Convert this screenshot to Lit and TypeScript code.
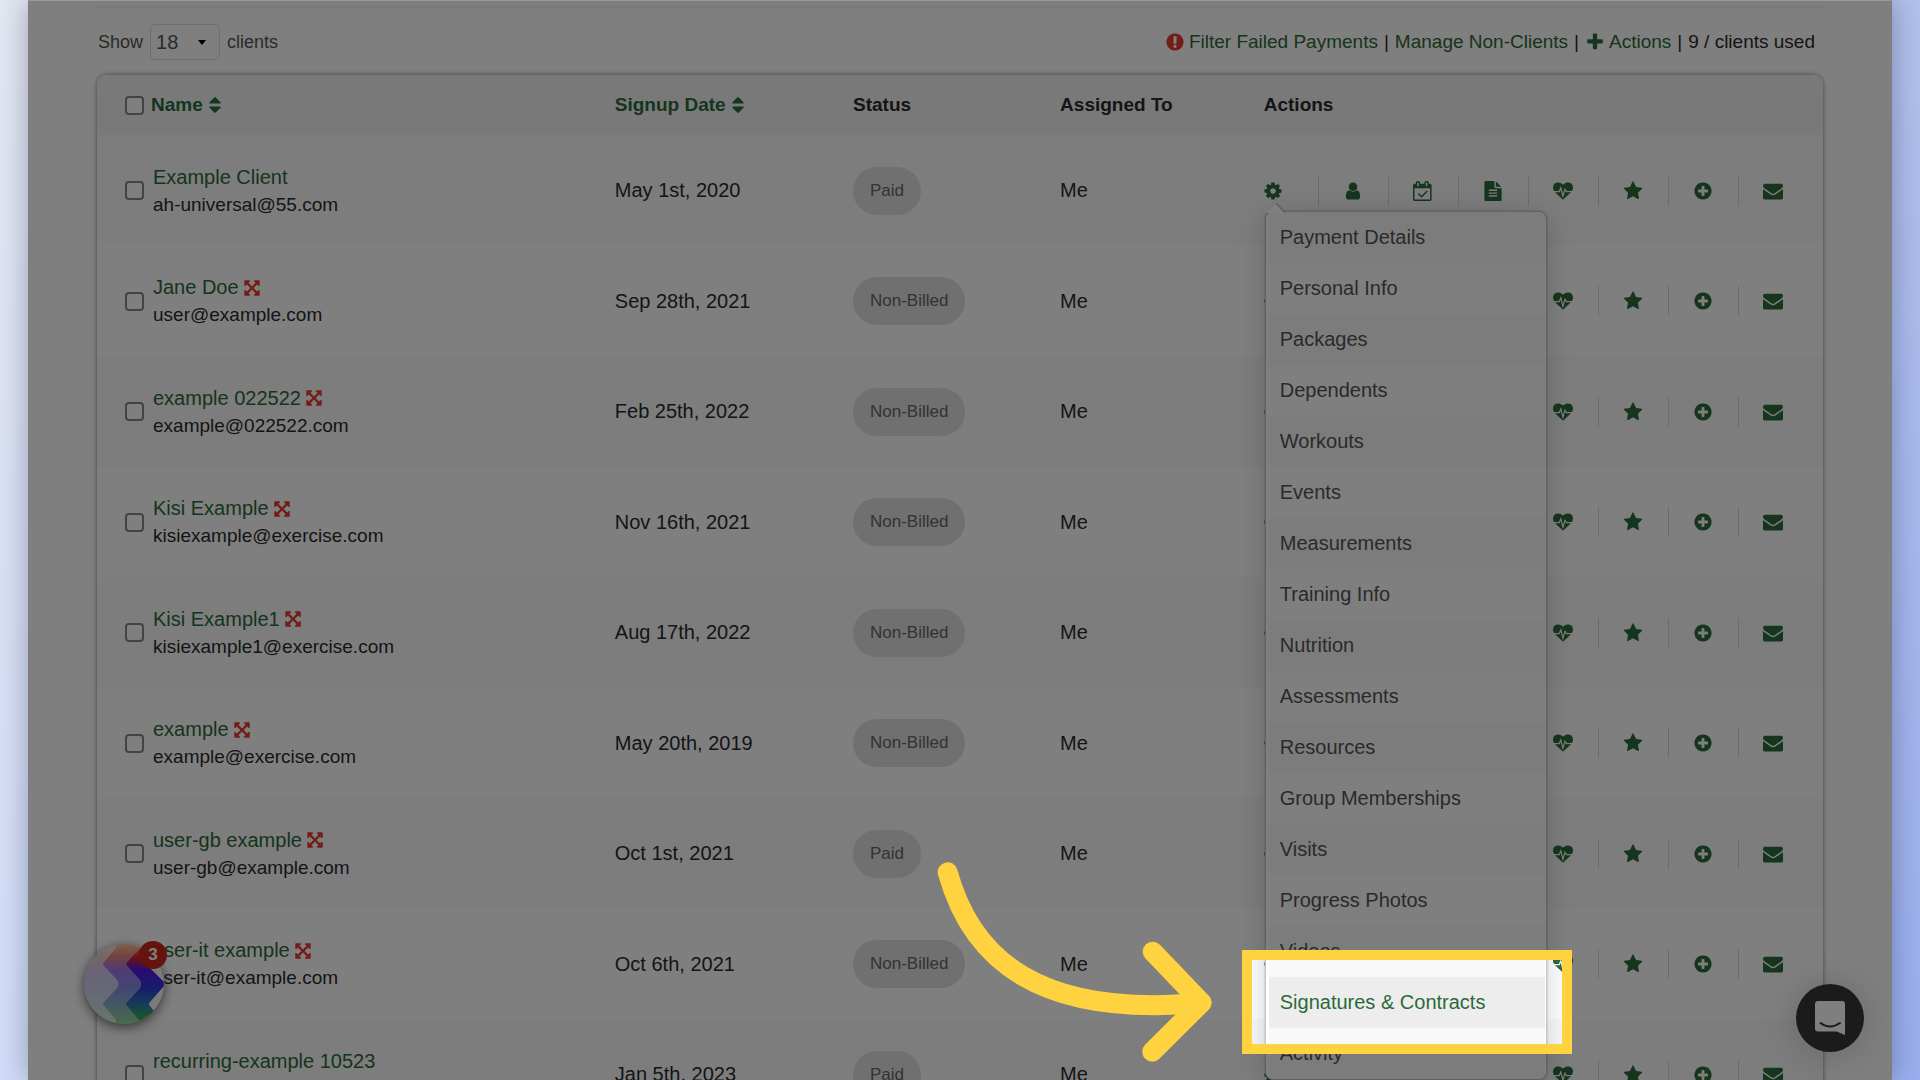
import { LitElement, html, css, svg, nothing } from "lit";
import { customElement, property } from "lit/decorators.js";

const ICONS: Record<string, string> = {
  cog: "M1152 896q0-106-75-181t-181-75-181 75-75 181 75 181 181 75 181-75 75-181zm512-109v222q0 12-8 23t-20 13l-185 28q-19 54-39 91 35 50 107 138 10 12 10 25t-9 23q-27 37-99 108t-94 71q-12 0-26-9l-138-108q-44 23-91 38-16 136-29 186-7 28-36 28h-222q-14 0-24.5-8.5t-11.5-21.5l-28-184q-49-16-90-37l-141 107q-10 9-25 9-14 0-25-11-126-114-165-168-7-10-7-23 0-12 8-23 15-21 51-66.5t54-70.5q-27-50-41-99l-183-27q-13-2-21-12.5t-8-23.5v-222q0-12 8-23t19-13l186-28q14-46 39-92-40-57-107-138-10-12-10-24 0-10 9-23 26-36 98.5-107.5t94.5-71.5q13 0 26 10l138 107q44-23 91-38 16-136 29-186 7-28 36-28h222q14 0 24.5 8.5t11.5 21.5l28 184q49 16 90 37l142-107q9-9 24-9 13 0 25 10 129 119 165 170 7 8 7 22 0 12-8 23-15 21-51 66.5t-54 70.5q26 50 41 98l183 28q13 2 21 12.5t8 23.5z",
  user: "M1536 1399q0 109-62.5 187t-150.5 78h-854q-88 0-150.5-78t-62.5-187q0-85 8.5-160.5t31.5-152 58.5-131 94-89 134.5-34.5q131 128 313 128t313-128q76 0 134.5 34.5t94 89 58.5 131 31.5 152 8.5 160.5zm-256-887q0 159-112.5 271.5t-271.5 112.5-271.5-112.5-112.5-271.5 112.5-271.5 271.5-112.5 271.5 112.5 112.5 271.5z",
  calendar: "M1303 964l-512 512q-10 9-23 9t-23-9l-288-288q-9-10-9-23t9-22l46-46q9-9 22-9t23 9l220 220 444-444q10-9 23-9t22 9l46 46q9 9 9 22t-9 23zm-1175 700h1408v-1024h-1408v1024zm384-1216v-288q0-14-9-23t-23-9h-64q-14 0-23 9t-9 23v288q0 14 9 23t23 9h64q14 0 23-9t9-23zm768 0v-288q0-14-9-23t-23-9h-64q-14 0-23 9t-9 23v288q0 14 9 23t23 9h64q14 0 23-9t9-23zm384-64v1280q0 52-38 90t-90 38h-1408q-52 0-90-38t-38-90v-1280q0-52 38-90t90-38h128v-96q0-66 47-113t113-47h64q66 0 113 47t47 113v96h384v-96q0-66 47-113t113-47h64q66 0 113 47t47 113v96h128q52 0 90 38t38 90z",
  file: "M1596 476q14 14 28 36h-472v-472q22 14 36 28zm-476 164h544v1056q0 40-28 68t-68 28h-1344q-40 0-68-28t-28-68v-1600q0-40 28-68t68-28h800v544q0 40 28 68t68 28zm160 736v-64q0-14-9-23t-23-9h-704q-14 0-23 9t-9 23v64q0 14 9 23t23 9h704q14 0 23-9t9-23zm0-256v-64q0-14-9-23t-23-9h-704q-14 0-23 9t-9 23v64q0 14 9 23t23 9h704q14 0 23-9t9-23zm0-256v-64q0-14-9-23t-23-9h-704q-14 0-23 9t-9 23v64q0 14 9 23t23 9h704q14 0 23-9t9-23z",
  heartbeat: "M896 1664q-26 0-44-18l-624-602q-10-8-27.5-26t-55.5-65.5-68-97.500-53.500-121-23.500-138q0-220 127-344t351-124q62 0 126.500 21.500t120 58 95.500 68.500 76 68q36-36 76-68t95.500-68.500 120-58 126.500-21.500q224 0 351 124t127 344q0 221-229 450l-623 600q-18 18-44 18z",
  star: "M1728 647q0 22-26 48l-363 354 86 500q1 7 1 20 0 21-10.5 35.5t-30.5 14.5q-19 0-40-12l-449-236-449 236q-22 12-40 12-21 0-31.5-14.5t-10.5-35.5q0-6 2-20l86-500-364-354q-25-27-25-48 0-37 56-46l502-73 225-455q19-41 49-41t49 41l225 455 502 73q56 9 56 46z",
  plusCircle: "M1344 960v-128q0-26-19-45t-45-19h-256v-256q0-26-19-45t-45-19h-128q-26 0-45 19t-19 45v256h-256q-26 0-45 19t-19 45v128q0 26 19 45t45 19h256v256q0 26 19 45t45 19h128q26 0 45-19t19-45v-256h256q26 0 45-19t19-45zm320-64q0 209-103 385.5t-279.5 279.5-385.5 103-385.5-103-279.5-279.5-103-385.5 103-385.5 279.5-279.5 385.5-103 385.5 103 279.5 279.5 103 385.5z",
  envelope: "M1792 710v794q0 66-47 113t-113 47h-1472q-66 0-113-47t-47-113v-794q44 49 101 87 362 246 497 345 57 42 92.5 65.5t94.5 48 110 24.5h2q51 0 110-24.5t94.5-48 92.5-65.5q170-123 498-345 57-39 100-87zm0-294q0 79-49 151t-122 123q-376 261-468 325-10 7-42.5 31t-54 38.5-52 32.5-57.5 27-50 9h-2q-23 0-50-9t-57.5-27-52-32.5-54-38.5-42.5-31q-91-64-262-182.5t-205-142.5q-62-42-117-115.5t-55-136.5q0-78 41.5-130t118.5-52h1472q65 0 112.5 47t47.5 113z",
  alert: "M896 128q209 0 385.5 103t279.5 279.5 103 385.5-103 385.5-279.5 279.5-385.5 103-385.5-103-279.5-279.5-103-385.5 103-385.5 279.5-279.5 385.5-103zm128 1247v-190q0-14-9-23.5t-22-9.5h-192q-13 0-23 10t-10 23v190q0 13 10 23t23 10h192q13 0 22-9.5t9-23.5zm-2-344l18-621q0-12-10-18-10-8-24-8h-220q-14 0-24 8-10 6-10 18l17 621q0 10 10 17.5t24 7.5h185q14 0 23.5-7.5t10.5-17.5z",
  plus: "M1600 736v192q0 40-28 68t-68 28h-416v416q0 40-28 68t-68 28h-192q-40 0-68-28t-28-68v-416h-416q-40 0-68-28t-28-68v-192q0-40 28-68t68-28h416v-416q0-40 28-68t68-28h192q40 0 68 28t28 68v416h416q40 0 68 28t28 68z",
  sort: "M1408 1088q0 26-19 45l-448 448q-19 19-45 19t-45-19l-448-448q-19-19-19-45t19-45 45-19h896q26 0 45 19t19 45zm0-384q0 26-19 45t-45 19h-896q-26 0-45-19t-19-45 19-45l448-448q19-19 45-19t45 19l448 448q19 19 19 45z",
  expand: "M1411 541l-355 355 355 355 144-144q29-31 70-14 39 17 39 59v448q0 26-19 45t-45 19h-448q-42 0-59-40-17-39 14-69l144-144-355-355-355 355 144 144q31 30 14 69-17 40-59 40h-448q-26 0-45-19t-19-45v-448q0-42 40-59 39-17 69 14l144 144 355-355-355-355-144 144q-19 19-45 19-12 0-24-5-40-17-40-59v-448q0-26 19-45t45-19h448q42 0 59 40 17 39-14 69l-144 144 355 355 355-355-144-144q-31-30-14-69 17-40 59-40h448q26 0 45 19t19 45v448q0 42-39 59-13 5-25 5-26 0-45-19z",
};

const icon = (name: string, cls = "") => html`<svg class="icon ${cls}" viewBox="0 0 1792 1792" aria-hidden="true">
  ${svg`<path d=${ICONS[name]} />`}
  ${name === "heartbeat" ? svg`<path class="pulse" d="M0 960H560L700 620 890 1360 1080 740 1210 960H1792" />` : nothing}
</svg>`;

interface Client {
  name: string;
  email: string;
  date: string;
  status: string;
  nonBilled: boolean;
}

const client = (name: string, email: string, date: string, status = "Non-Billed", flagged = true): Client => ({
  name,
  email,
  date,
  status,
  nonBilled: flagged,
});

const CLIENTS: Client[] = [
  client("Example Client", "ah-universal@55.com", "May 1st, 2020", "Paid", false),
  client("Jane Doe", "user@example.com", "Sep 28th, 2021"),
  client("example 022522", "example@022522.com", "Feb 25th, 2022"),
  client("Kisi Example", "kisiexample@exercise.com", "Nov 16th, 2021"),
  client("Kisi Example1", "kisiexample1@exercise.com", "Aug 17th, 2022"),
  client("example", "example@exercise.com", "May 20th, 2019"),
  client("user-gb example", "user-gb@example.com", "Oct 1st, 2021", "Paid"),
  client("user-it example", "user-it@example.com", "Oct 6th, 2021"),
  client("recurring-example 10523", "", "Jan 5th, 2023", "Paid", false),
];

const ACTIONS: [string, string][] = [
  ["cog", "Settings"],
  ["user", "Profile"],
  ["calendar", "Calendar"],
  ["file", "Notes"],
  ["heartbeat", "Health"],
  ["star", "Favorite"],
  ["plusCircle", "Add"],
  ["envelope", "Message"],
];

const MENU = [
  "Payment Details",
  "Personal Info",
  "Packages",
  "Dependents",
  "Workouts",
  "Events",
  "Measurements",
  "Training Info",
  "Nutrition",
  "Assessments",
  "Resources",
  "Group Memberships",
  "Visits",
  "Progress Photos",
  "Videos",
  "Signatures & Contracts",
  "Activity",
];

@customElement("client-menu")
export class ClientMenu extends LitElement {
  @property() active = "Signatures & Contracts";

  static styles = css`
    :host {
      display: block;
      box-sizing: border-box;
      width: 282px;
      padding: 0 1px 0 3px;
      border: 1px solid #c4c4c8;
      border-radius: 8px;
      background: #fff;
      box-shadow: 0 4px 28px rgba(40, 50, 90, 0.22), 0 0 2px rgba(0, 0, 0, 0.3);
    }
    .pointer {
      position: absolute;
      top: -10px;
      left: 1px;
      display: block;
      width: 18px;
      height: 11px;
    }
    .list {
      margin: 0;
      padding: 0;
      list-style: none;
      overflow: hidden;
      border-radius: 6px;
    }
    .item:nth-child(odd) {
      background: #f9f9f9;
    }
    .item.active {
      background: #ededed;
    }
    .link {
      display: block;
      padding: 0 11px;
      font-size: 20px;
      line-height: 51px;
      color: #555;
      text-decoration: none;
    }
    .active .link {
      color: #2b6a38;
    }
  `;

  render() {
    return html`
      <svg class="pointer" viewBox="0 0 18 11" aria-hidden="true">
        <path d="M0 11 9 1 18 11z" fill="#fff" />
        <path d="M9 1 18 10.5" stroke="#bbb" stroke-width="1.5" fill="none" />
      </svg>
      <ul class="list">
        ${MENU.map((m) => html`<li class="item ${m === this.active ? "active" : ""}"><a class="link" href="#">${m}</a></li>`)}
      </ul>
    `;
  }
}

@customElement("app-root")
export class AppRoot extends LitElement {
  static styles = css`
    :host {
      display: block;
      box-sizing: border-box;
      height: 100vh;
      overflow: hidden;
      padding: 0 28px;
      background: linear-gradient(135deg, #e4e8f2 0%, #d2dcf8 36%, #b2c1ec 64%, #9aafee 100%);
      font-family: "Liberation Sans", Arial, Helvetica, sans-serif;
      font-size: 20px;
      color: #2b2b2b;
    }
    .frame {
      height: 100%;
      box-shadow: 0 0 28px rgba(20, 25, 60, 0.35);
    }
    .window {
      position: relative;
      box-sizing: border-box;
      height: 100%;
      overflow: hidden;
      padding: 5px 69px 0;
      border-top: 1px solid #999;
      background: #fff;
    }
    .rule {
      height: 2px;
      margin: 0;
      border: 0;
      background: #f0f0f0;
    }
    .toolbar {
      display: flex;
      justify-content: space-between;
      align-items: center;
      height: 66px;
      padding: 1px 8px 0 1px;
      font-size: 19px;
    }
    .length {
      display: flex;
      align-items: center;
      gap: 7px;
      font-size: 18px;
      color: #555;
    }
    .select-wrap {
      display: grid;
      align-items: center;
    }
    .select-wrap > * {
      grid-area: 1 / 1;
    }
    .select {
      appearance: none;
      box-sizing: border-box;
      width: 70px;
      height: 36px;
      padding: 0 5px;
      border: 1px solid #dcdcdc;
      border-radius: 5px;
      background: #fff;
      font: inherit;
      font-size: 20px;
      color: #555;
    }
    .caret {
      justify-self: end;
      width: 8px;
      height: 5px;
      margin-right: 14px;
      fill: #000;
      pointer-events: none;
    }
    .links {
      display: flex;
      align-items: center;
      gap: 6px;
    }
    .link {
      color: #2b6a38;
      text-decoration: none;
    }
    .plain {
      display: inline-flex;
      align-items: center;
      gap: 4px;
    }
    .icon {
      display: block;
      flex: none;
      width: 20px;
      height: 20px;
      fill: #2b6a38;
    }
    .pulse {
      fill: none;
      stroke: #fcfcfc;
      stroke-width: 110;
    }
    .red {
      fill: #e8382c;
    }
    .small {
      width: 18px;
      height: 18px;
    }
    .card {
      border-radius: 10px;
      box-shadow: 0 0 5px rgba(30, 50, 60, 0.6);
    }
    .table {
      width: 100%;
      table-layout: fixed;
      border-collapse: separate;
      border-spacing: 0;
      overflow: hidden;
      border-radius: 10px;
      background: #fff;
    }
    .c-name {
      width: 30%;
    }
    .c-date {
      width: 13.8%;
    }
    .c-status {
      width: 12%;
    }
    .c-owner {
      width: 11.8%;
    }
    .th {
      height: 60px;
      padding: 0;
      background: #f2f2f2;
      text-align: left;
      font-size: 19px;
      font-weight: 700;
      color: #2b2b2b;
    }
    .td {
      height: 110px;
      padding: 0;
      vertical-align: middle;
    }
    .row:nth-child(odd) .td {
      height: 111px;
      background: #fafafa;
    }
    .who {
      display: flex;
      align-items: center;
      gap: 9px;
      padding-left: 28px;
    }
    .head {
      gap: 7px;
    }
    .sort {
      display: inline-flex;
      align-items: center;
      gap: 2px;
      padding: 0;
      border: 0;
      background: none;
      font: inherit;
      color: #2b6a38;
    }
    .check {
      appearance: none;
      box-sizing: border-box;
      flex: none;
      width: 19px;
      height: 19px;
      margin: 0;
      border: 2px solid #868686;
      border-radius: 4px;
      background: #fff;
    }
    .ident {
      display: flex;
      flex-direction: column;
    }
    .line {
      display: flex;
      align-items: center;
      gap: 4px;
      min-height: 27px;
      line-height: 27px;
    }
    .email {
      font-size: 19px;
    }
    .pill {
      display: inline-block;
      padding: 0 17px;
      border-radius: 24px;
      background: #e0e0e0;
      font-size: 17px;
      line-height: 48px;
      color: #666;
    }
    .actions {
      position: relative;
      display: flex;
      height: 30px;
    }
    .act {
      box-sizing: border-box;
      display: flex;
      align-items: center;
      justify-content: center;
      width: 70px;
      padding: 0;
      border: 0;
      border-right: 1px solid #d8d8d8;
      background: none;
    }
    .act:first-child {
      justify-content: flex-start;
      width: 55px;
    }
    .act:last-of-type {
      border-right-color: transparent;
    }
    .act:first-child .icon {
      margin-left: -1px;
    }
    .menu {
      position: absolute;
      top: 35px;
      left: 1px;
      z-index: 2;
    }
    .pendo {
      position: absolute;
      left: 56px;
      bottom: 56px;
      width: 80px;
      height: 80px;
      padding: 0;
      border: 0;
      border-radius: 50%;
      background: #f4f4f4;
      box-shadow: 0 3px 12px rgba(0, 0, 0, 0.6);
    }
    .swirl {
      display: block;
      width: 80px;
      height: 80px;
    }
    .count {
      position: absolute;
      top: -3px;
      right: -3px;
      width: 28px;
      border-radius: 50%;
      background: #c8281c;
      font-size: 17px;
      font-weight: 700;
      line-height: 28px;
      text-align: center;
      color: #fff;
    }
    .chat {
      position: absolute;
      right: 28px;
      bottom: 28px;
      display: grid;
      place-items: center;
      width: 68px;
      height: 68px;
      padding: 0;
      border: 0;
      border-radius: 50%;
      background: #363636;
      box-shadow: 0 2px 40px rgba(0, 0, 0, 0.2);
    }
    .bubble {
      width: 30px;
      height: 34px;
    }
    .spotlight {
      position: absolute;
      right: 320px;
      bottom: 26px;
      z-index: 3;
      box-sizing: border-box;
      width: 330px;
      height: 104px;
      border: 10px solid #ffd240;
      box-shadow: 0 0 0 2400px rgba(0, 0, 0, 0.5);
      pointer-events: none;
    }
    .arrow {
      position: absolute;
      right: 673px;
      bottom: 12px;
      z-index: 4;
      width: 290px;
      height: 210px;
      fill: none;
      stroke: #ffd240;
      stroke-width: 20;
      stroke-linecap: round;
      stroke-linejoin: round;
      pointer-events: none;
    }
  `;

  private row(c: Client, i: number) {
    return html`<tr class="row">
      <td class="td">
        <div class="who">
          <input class="check" type="checkbox" aria-label="Select ${c.name}" />
          <div class="ident">
            <div class="line"><a class="link" href="#">${c.name}</a>${c.nonBilled ? icon("expand", "red small") : nothing}</div>
            <div class="line email">${c.email}</div>
          </div>
        </div>
      </td>
      <td class="td">${c.date}</td>
      <td class="td"><span class="pill">${c.status}</span></td>
      <td class="td">Me</td>
      <td class="td">
        <div class="actions">
          ${ACTIONS.map(([n, label]) => html`<button class="act" aria-label=${label}>${icon(n)}</button>`)}
          ${i === 0 ? html`<client-menu class="menu"></client-menu>` : nothing}
        </div>
      </td>
    </tr>`;
  }

  render() {
    return html`
      <div class="frame">
        <main class="window">
          <hr class="rule" />
          <div class="toolbar">
            <div class="length">
              <label for="len">Show</label>
              <span class="select-wrap">
                <select class="select" id="len"><option>18</option></select>
                <svg class="caret" viewBox="0 0 8 5" aria-hidden="true"><path d="M0 0h8L4 5z" /></svg>
              </span>
              <span>clients</span>
            </div>
            <nav class="links">
              <a class="link plain" href="#">${icon("alert", "red")}Filter Failed Payments</a>
              <span>|</span>
              <a class="link" href="#">Manage Non-Clients</a>
              <span>|</span>
              <a class="link plain" href="#">${icon("plus")}Actions</a>
              <span>|</span>
              <span>9 / clients used</span>
            </nav>
          </div>
          <div class="card">
            <table class="table">
              <colgroup>
                <col class="c-name" />
                <col class="c-date" />
                <col class="c-status" />
                <col class="c-owner" />
                <col />
              </colgroup>
              <thead>
                <tr>
                  <th class="th">
                    <div class="who head">
                      <input class="check" type="checkbox" aria-label="Select all" />
                      <button class="sort">Name${icon("sort")}</button>
                    </div>
                  </th>
                  <th class="th"><button class="sort">Signup Date${icon("sort")}</button></th>
                  <th class="th">Status</th>
                  <th class="th">Assigned To</th>
                  <th class="th">Actions</th>
                </tr>
              </thead>
              <tbody>
                ${CLIENTS.map((c, i) => this.row(c, i))}
              </tbody>
            </table>
          </div>
          <button class="pendo" aria-label="Notifications">
            <svg class="swirl" viewBox="0 0 80 80" aria-hidden="true">
              <defs>
                <linearGradient id="g" gradientUnits="userSpaceOnUse" x1="0" y1="0" x2="0" y2="80">
                  <stop offset="0" stop-color="#ff9a4c" />
                  <stop offset="0.15" stop-color="#dc2a1c" />
                  <stop offset="0.33" stop-color="#5414e8" />
                  <stop offset="0.55" stop-color="#3038d4" />
                  <stop offset="0.75" stop-color="#2c78b0" />
                  <stop offset="0.92" stop-color="#38a858" />
                  <stop offset="1" stop-color="#48c050" />
                </linearGradient>
                <clipPath id="c"><circle cx="40" cy="40" r="40" /></clipPath>
              </defs>
              <g clip-path="url(#c)" fill="url(#g)">
                <path opacity="0.2" d="M0 0H32V4L20 18Q18 20 20 22L33 36Q36 40 33 44L20 58Q18 60 20 62L32 76V80H0z" />
                <path opacity="0.55" d="M32 0H60L43 18Q41 20 43 22L55 35Q59 40 55 45L43 58Q41 60 43 62L58 80H32V76L20 62Q18 60 20 58L33 44Q36 40 33 36L20 22Q18 20 20 18L32 4z" />
                <path d="M60 0L43 18Q41 20 43 22L55 35Q59 40 55 45L43 58Q41 60 43 62L58 80H80L66 62Q64 60 66 58L80 42V38L66 24L80 0z" />
              </g>
            </svg>
            <span class="count">3</span>
          </button>
          <button class="chat" aria-label="Open chat">
            <svg class="bubble" viewBox="0 0 30 34" aria-hidden="true">
              <path d="M3 0H27Q30 0 30 3V34L21.5 30.5H3Q0 30.5 0 27.5V3Q0 0 3 0z" fill="#fff" />
              <path d="M5.5 22Q15 29 25 22" fill="none" stroke="#363636" stroke-width="2" stroke-linecap="round" />
            </svg>
          </button>
          <div class="spotlight"></div>
          <svg class="arrow" viewBox="929 858 290 210" aria-hidden="true">
            <path d="M947.7 872.3C972 960 1040 1018 1201.5 1002.7" />
            <path d="M1152.7 951.7 1201.5 1002.7 1152.3 1051.7" />
          </svg>
        </main>
      </div>
    `;
  }
}
